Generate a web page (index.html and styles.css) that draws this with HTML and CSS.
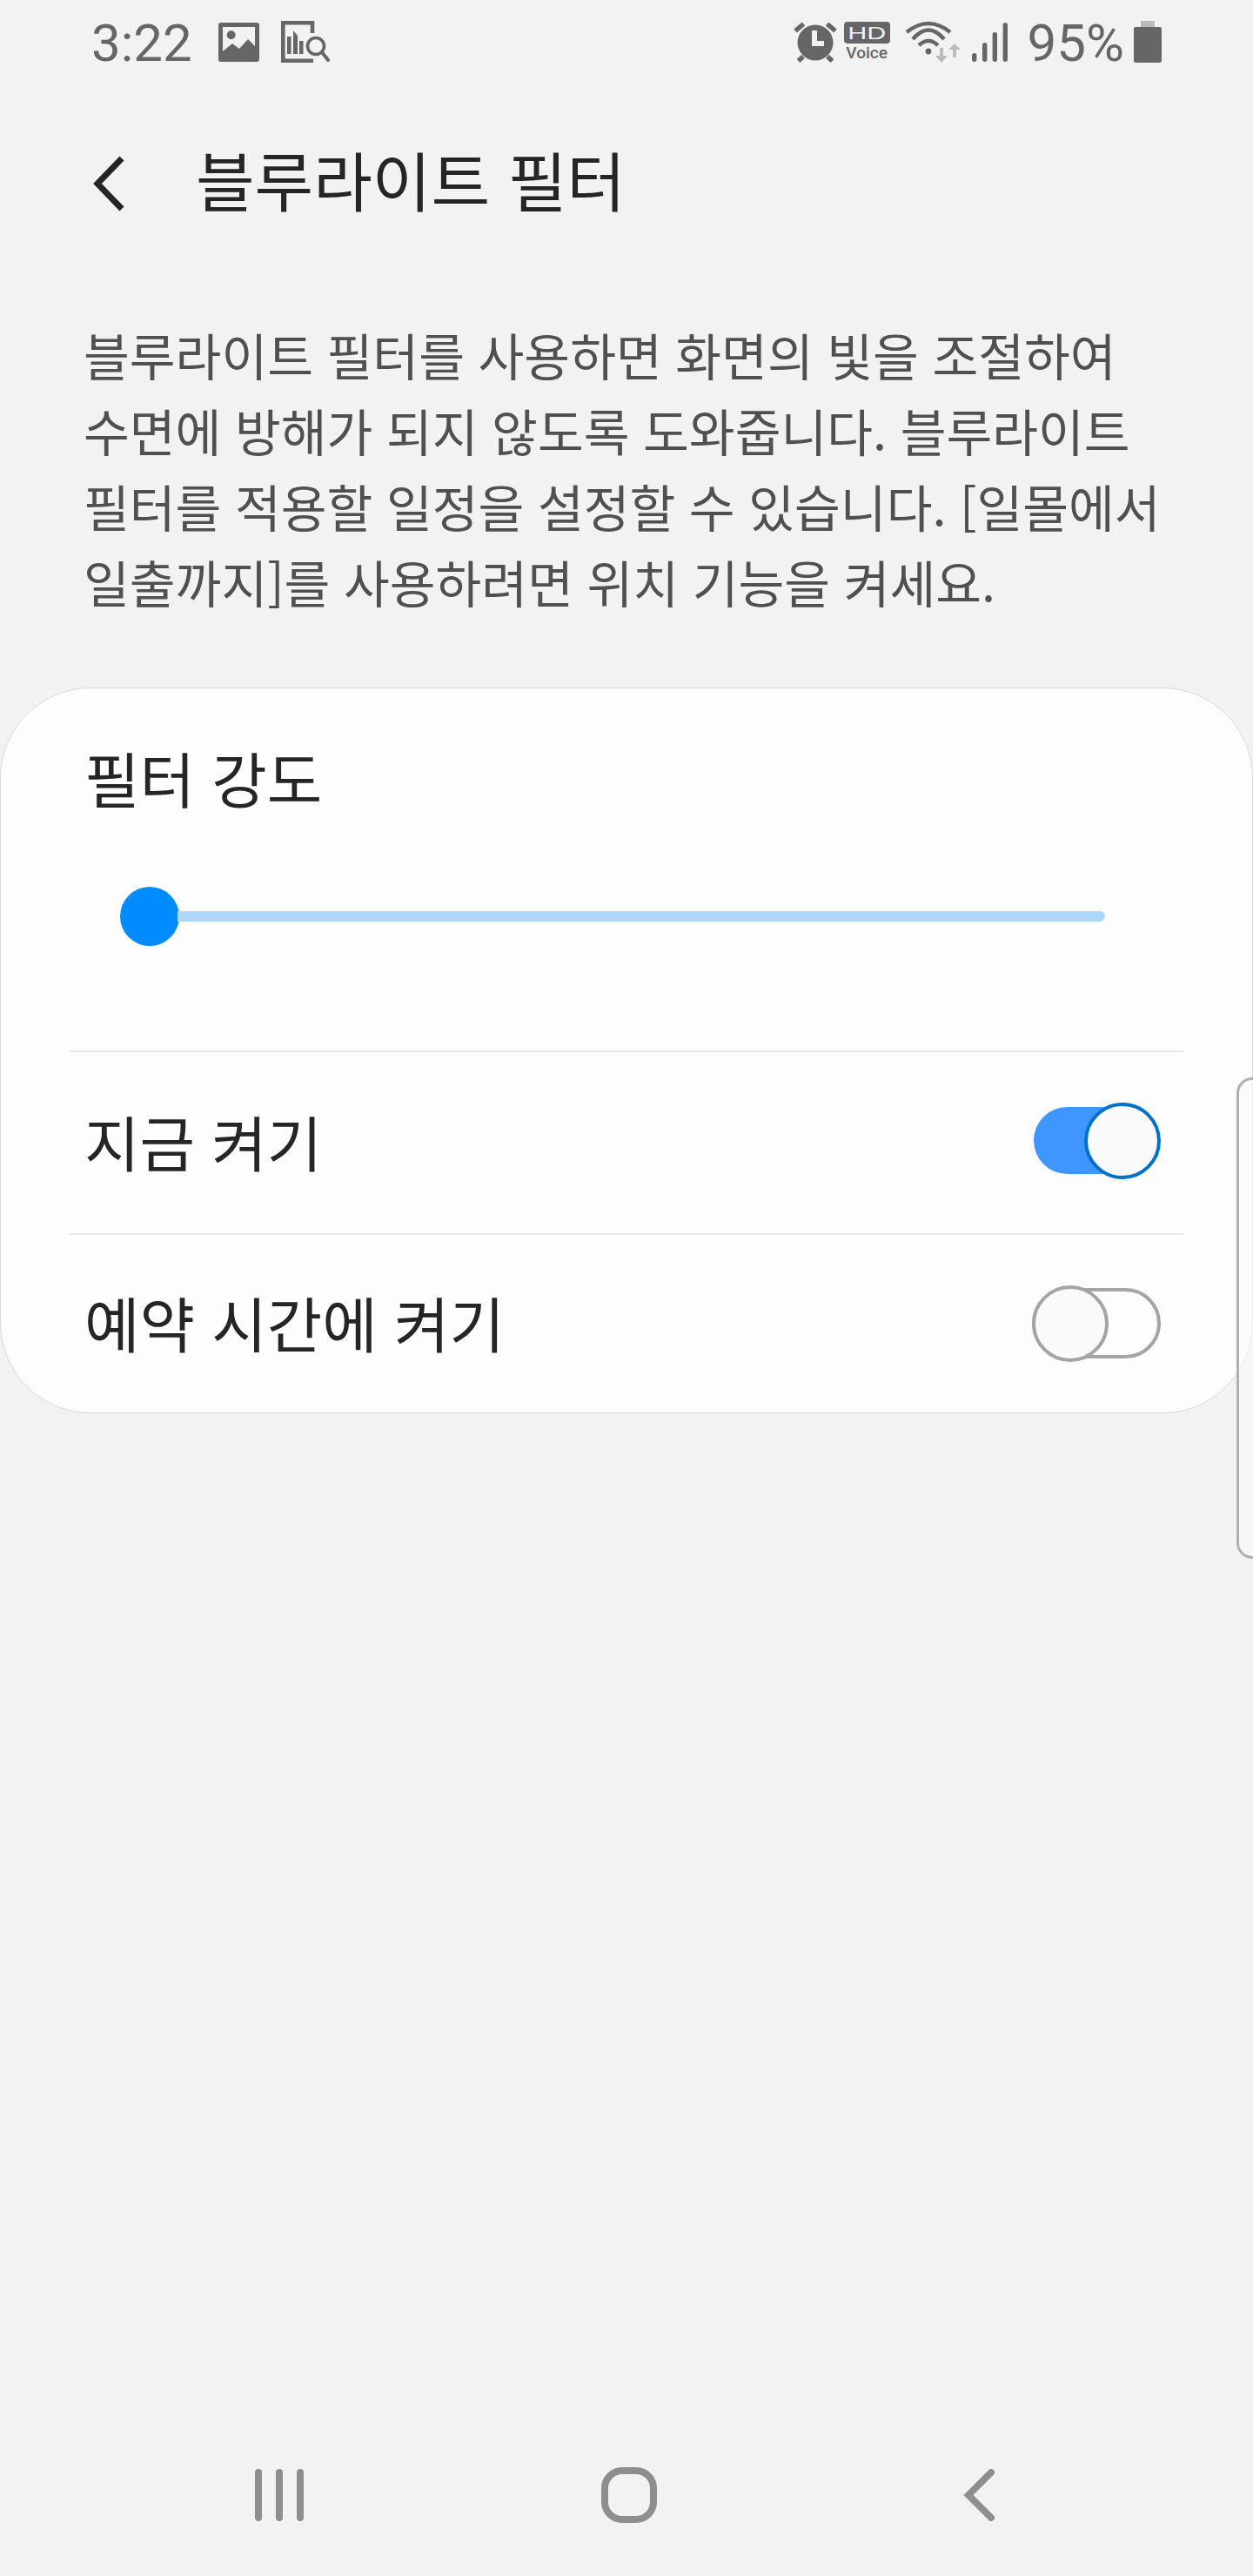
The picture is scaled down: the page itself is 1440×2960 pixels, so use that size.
FILE: index.html
```html
<!DOCTYPE html>
<html lang="ko">
<head>
    <meta charset="UTF-8">
    <meta name="viewport" content="width=device-width, initial-scale=1.0">
    <title>블루라이트 필터</title>
    <link rel="stylesheet" href="styles.css">
</head>
<body>
    <div class="screen">
        <div class="status-bar">
            <div class="status-left">
                <span class="status-text">3:22</span>
                <svg class="icon-image" width="47" height="45" viewBox="0 0 47 45">
                    <rect width="47" height="45" rx="3" fill="#666"/>
                    <path d="M5 5H42V27L34 19L24 30L16 24L5 33Z" fill="#f2f2f2"/>
                    <circle cx="14.7" cy="14.3" r="5" fill="#666"/>
                </svg>
                <svg class="icon-report" width="56" height="48" viewBox="0 0 56 48">
                    <path d="M36 14V2.3H2.3V45.7H37" fill="none" stroke="#666" stroke-width="4.6"/>
                    <path d="M7 18H11.5V38H7ZM14 11L19 17V38H14ZM21 23H25.5V38H21Z" fill="#666"/>
                    <circle cx="40" cy="29" r="9.5" fill="none" stroke="#666" stroke-width="3.6"/>
                    <path d="M47 36L54 45" fill="none" stroke="#666" stroke-width="4" stroke-linecap="round"/>
                </svg>
            </div>
            <div class="status-right">
                <svg class="icon-alarm" width="50" height="48" viewBox="0 0 50 48">
                    <circle cx="25" cy="25" r="20.5" fill="#666"/>
                    <path d="M2 11.5L11.5 3.5M48 11.5L38.5 3.5M5.5 46L11 41M44.5 46L39 41" fill="none" stroke="#666" stroke-width="5.5"/>
                    <path d="M24 11V26H35" fill="none" stroke="#f2f2f2" stroke-width="6"/>
                </svg>
                <div class="hd-voice">
                    <div class="hd-badge"><span>HD</span></div>
                    <div class="voice-label">Voice</div>
                </div>
                <svg class="icon-wifi" width="64" height="48" viewBox="0 0 64 48">
                    <g fill="none" stroke="#666" stroke-width="4.4">
                        <path d="M2 13Q27 -7 52 13"/>
                        <path d="M9 21Q27 0 45 21"/>
                        <path d="M16 28Q27 18 38 28"/>
                    </g>
                    <circle cx="27" cy="35" r="3.4" fill="#666"/>
                    <path d="M40 31H44V40H49L42 48L35 40H40ZM55 42H59V33H64L57 26L50 33H55Z" fill="#bbb"/>
                </svg>
                <svg class="icon-signal" width="41" height="45" viewBox="0 0 41 45">
                    <rect x="0" y="35" width="5.4" height="10" rx="2.7" fill="#666"/>
                    <rect x="12" y="23" width="5.4" height="22" rx="2.7" fill="#666"/>
                    <rect x="23.6" y="11" width="5.4" height="34" rx="2.7" fill="#666"/>
                    <rect x="35.6" y="0" width="5.4" height="45" rx="2.7" fill="#666"/>
                </svg>
                <span class="status-text battery-text">95%</span>
                <svg class="icon-battery" width="32" height="48" viewBox="0 0 32 48">
                    <path d="M8 0H24V7H8Z" fill="#bbb"/>
                    <path d="M2 7H30Q32 7 32 9V46Q32 48 30 48H2Q0 48 0 46V9Q0 7 2 7Z" fill="#666"/>
                </svg>
            </div>
        </div>

        <header class="title-bar">
            <svg class="back-icon" width="36" height="64" viewBox="0 0 36 64">
                <path d="M33 3L5 32L33 61" fill="none" stroke="#252525" stroke-width="7"/>
            </svg>
            <h1 class="page-title">블루라이트 필터</h1>
        </header>

        <p class="description">블루라이트 필터를 사용하면 화면의 빛을 조절하여 수면에 방해가 되지 않도록 도와줍니다. 블루라이트 필터를 적용할 일정을 설정할 수 있습니다. [일몰에서 일출까지]를 사용하려면 위치 기능을 켜세요.</p>

        <section class="card">
            <div class="card-title">필터 강도</div>
            <div class="slider">
                <div class="slider-thumb"></div>
                <div class="slider-track"></div>
            </div>
            <div class="row">
                <span class="row-label">지금 켜기</span>
                <div class="toggle toggle-on">
                    <div class="toggle-track"></div>
                    <div class="toggle-thumb"></div>
                </div>
            </div>
            <div class="row row-last">
                <span class="row-label">예약 시간에 켜기</span>
                <div class="toggle toggle-off">
                    <div class="toggle-track"></div>
                    <div class="toggle-thumb"></div>
                </div>
            </div>
        </section>

        <div class="edge-handle"></div>

        <nav class="nav-bar">
            <div class="nav-item">
                <svg width="56" height="60" viewBox="0 0 56 60">
                    <path d="M4 4V56M28 4V56M52 4V56" fill="none" stroke="#8e8e8e" stroke-width="8" stroke-linecap="round"/>
                </svg>
            </div>
            <div class="nav-item">
                <svg width="64" height="64" viewBox="0 0 64 64">
                    <rect x="4" y="4" width="56" height="56" rx="20" fill="none" stroke="#8e8e8e" stroke-width="8"/>
                </svg>
            </div>
            <div class="nav-item">
                <svg width="36" height="60" viewBox="0 0 36 60">
                    <path d="M32 4L6 30L32 56" fill="none" stroke="#8e8e8e" stroke-width="8" stroke-linecap="round"/>
                </svg>
            </div>
        </nav>
    </div>
</body>
</html>
```

FILE: styles.css
```css
* {
    box-sizing: border-box;
}
body {
    margin: 0;
    background-color: #f2f2f2;
    font-family: "Noto Sans CJK KR", "Noto Sans", sans-serif;
    color: #252525;
}
.screen {
    position: relative;
    height: 2960px;
    display: flex;
    flex-direction: column;
    overflow: hidden;
}

/* status bar */
.status-bar {
    height: 96px;
    flex: none;
    display: flex;
    align-items: center;
    justify-content: space-between;
    padding: 0 105px 0 105px;
}
.status-left,
.status-right {
    display: flex;
    align-items: center;
}
.status-text {
    margin-top: 4px;
    font-family: Roboto, sans-serif;
    font-size: 60px;
    line-height: 60px;
    color: #666;
}
.icon-image {
    margin-left: 30px;
}
.icon-report {
    margin-left: 25px;
}
.hd-voice {
    margin-left: 8px;
    width: 53px;
    height: 46px;
    display: flex;
    flex-direction: column;
    align-items: center;
}
.hd-badge {
    width: 53px;
    height: 25px;
    border-radius: 4px;
    background-color: #666;
    color: #f2f2f2;
    font-family: "Liberation Sans", sans-serif;
    font-size: 21px;
    line-height: 25px;
    text-align: center;
}
.hd-badge span {
    display: inline-block;
    transform: scaleX(1.45);
}
.voice-label {
    font-family: Roboto, sans-serif;
    font-weight: 500;
    font-size: 19px;
    line-height: 21px;
    color: #666;
}
.icon-wifi {
    margin-left: 17px;
}
.icon-signal {
    margin-left: 13px;
}
.battery-text {
    margin-left: 23px;
}
.icon-battery {
    margin-left: 11px;
}

/* title */
.title-bar {
    height: 230px;
    flex: none;
    display: flex;
    align-items: center;
    padding-left: 107px;
}
.page-title {
    margin: 0 0 12px 82px;
    font-size: 73.5px;
    font-weight: 400;
    line-height: 100px;
}
.description {
    margin: 38px 0 78px;
    padding: 0 60px 0 96px;
    font-size: 57.4px;
    line-height: 87px;
    word-spacing: -0.5px;
    color: #505050;
    word-break: keep-all;
}

/* card */
.card {
    flex: none;
    width: 100%;
    padding: 0 79px;
    border: 1px solid #d8d8d8;
    border-radius: 104px;
    background-color: #fdfdfd;
}
.card-title {
    margin-top: 62px;
    padding-left: 17px;
    font-size: 69px;
    line-height: 80px;
}
.slider {
    display: flex;
    align-items: center;
    margin-top: 86px;
    padding: 0 90px 120px 58px;
}
.slider-thumb {
    flex: none;
    width: 68px;
    height: 68px;
    border-radius: 50%;
    background-color: #008cff;
}
.slider-track {
    flex: 1;
    height: 12px;
    margin-left: -2px;
    border-radius: 0 6px 6px 0;
    background-color: #aed8fb;
}
.row {
    height: 210px;
    display: flex;
    align-items: center;
    justify-content: space-between;
    padding: 0 26px 0 17px;
    border-top: 2px solid #e8e8e8;
}
.row-last {
    height: 206px;
}
.row-label {
    margin-bottom: 4px;
    font-size: 69px;
    line-height: 80px;
}

/* toggles */
.toggle {
    position: relative;
    width: 148px;
    height: 88px;
}
.toggle-track {
    position: absolute;
    border-radius: 41px;
}
.toggle-thumb {
    position: absolute;
    top: 0;
    width: 88px;
    height: 88px;
    border-radius: 50%;
    background-color: #fafafa;
}
.toggle-on {
    margin-bottom: 4px;
}
.toggle-on .toggle-track {
    top: 5px;
    left: 2px;
    width: 140px;
    height: 77px;
    background-color: #4096ff;
}
.toggle-on .toggle-thumb {
    right: 0;
    border: 4px solid #0072c6;
}
.toggle-off .toggle-track {
    top: 3px;
    left: 0;
    width: 148px;
    height: 81px;
    border: 4px solid #a5a5a5;
}
.toggle-off .toggle-thumb {
    left: 0;
    border: 4px solid #a5a5a5;
}

/* edge panel handle, lies over the card */
.edge-handle {
    position: absolute;
    top: 1238px;
    left: 1421px;
    width: 40px;
    height: 553px;
    border: 3px solid #b0b0b0;
    border-radius: 18px;
    background-color: rgba(250, 250, 250, 0.6);
}

/* bottom nav */
.nav-bar {
    margin-top: auto;
    height: 186px;
    flex: none;
    display: flex;
    align-items: center;
    justify-content: center;
    padding-left: 6px;
}
.nav-item {
    width: 402px;
    display: flex;
    justify-content: center;
}
.nav-item svg {
    display: block;
}
```
